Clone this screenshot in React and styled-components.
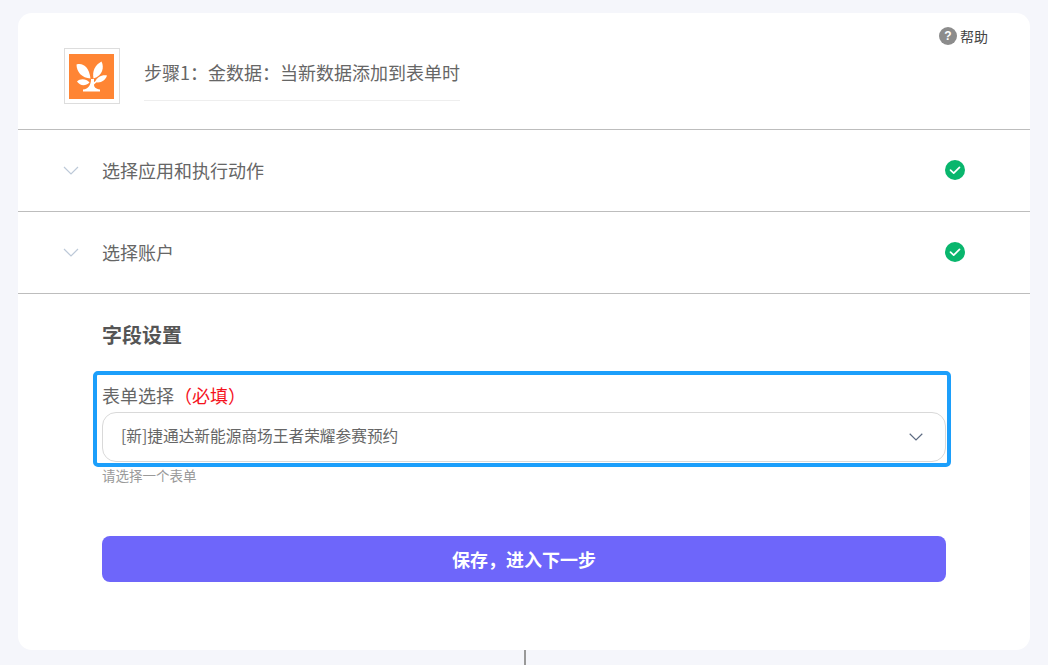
import styled, { createGlobalStyle } from "styled-components";

const GlobalStyle = createGlobalStyle`
  html, body {
    margin: 0;
    height: 100%;
    overflow: hidden;
    background: #f5f6fb;
    font-family: "Noto Sans CJK SC", "Liberation Sans", sans-serif;
  }
`;

const Page = styled.div`
  padding: 13px 18px 0;
  display: flex;
  flex-direction: column;
  align-items: center;
`;
const Card = styled.div`
  width: 100%;
  height: 637px;
  box-sizing: border-box;
  background: #fff;
  border-radius: 14px;
`;
const Connector = styled.div`
  width: 2px;
  height: 15px;
  background: #999;
  margin-left: 2px;
`;

const Header = styled.div`
  height: 116px;
  box-sizing: border-box;
  padding: 35px 42px 0 46px;
  display: flex;
  align-items: flex-start;
`;
const Logo = styled.div`
  width: 56px;
  height: 56px;
  box-sizing: border-box;
  border: 1px solid #ddd;
  padding: 5px 0 0 4px;
`;
const Title = styled.div`
  margin: 0 0 0 24px;
  width: 316px;
  height: 53px;
  box-sizing: border-box;
  border-bottom: 1px solid #eeeeee;
  padding-top: 10px;
  font-size: 18px;
  line-height: 28px;
  color: #666;
  white-space: nowrap;
`;
const Help = styled.div`
  margin-left: auto;
  margin-top: -22px;
  display: flex;
  align-items: center;
  gap: 3px;
  font-size: 14px;
  line-height: 20px;
  color: #444;
`;
const HelpDot = styled.span`
  width: 18px;
  height: 18px;
  border-radius: 50%;
  background: #8c8c8c;
  color: #fff;
  font-size: 12px;
  font-weight: 700;
  line-height: 18px;
  text-align: center;
  font-family: "Liberation Sans", sans-serif;
`;

const Row = styled.div`
  height: 82px;
  box-sizing: border-box;
  border-top: 1px solid #bdbdbd;
  padding: 0 65px 0 45px;
  display: flex;
  align-items: center;
  color: #666;
  font-size: 18px;
`;
const RowLabel = styled.span`
  margin: 0 0 2px 23px;
  flex: 1;
`;
const BadgeSvg = styled.svg`
  margin-bottom: 2px;
`;

const Fields = styled.div`
  border-top: 1px solid #bdbdbd;
  padding: 27px 84px 0;
`;
const SectionTitle = styled.div`
  font-size: 20px;
  line-height: 28px;
  font-weight: 700;
  color: #555;
`;
const Highlight = styled.div`
  margin: 22px -5px 0 -9px;
  height: 96px;
  box-sizing: border-box;
  border: 4px solid #1c9ffb;
  border-radius: 5px;
  padding: 7px 1px 0 5px;
`;
const Label = styled.div`
  font-size: 18px;
  line-height: 26px;
  color: #666;
`;
const Required = styled.span`
  color: #f5121d;
`;
const Select = styled.div`
  margin-top: 4px;
  height: 50px;
  box-sizing: border-box;
  border: 1px solid #d9d9d9;
  border-radius: 14px;
  padding: 0 22px 0 18px;
  display: flex;
  align-items: center;
  justify-content: space-between;
  font-size: 15.7px;
  color: #666;
`;
const SelectValue = styled.span`
  margin-bottom: 3px;
`;
const Hint = styled.div`
  margin-top: -1px;
  font-size: 13.5px;
  line-height: 18px;
  color: #9a9a9a;
`;
const SaveButton = styled.button`
  display: block;
  width: 100%;
  height: 46px;
  margin-top: 52px;
  border: 0;
  border-radius: 8px;
  background: #6e66fa;
  color: #fff;
  font-family: inherit;
  font-size: 18px;
  font-weight: 700;
`;

const TreeLogo = () => (
  <svg width="45" height="45" viewBox="0 0 45 45" style={{ display: "block" }}>
    <rect width="45" height="45" fill="#ff8534" />
    <g fill="#fff">
      <path d="M7.5 10.5 C14 8.5 20 13 21.5 24.5 C13 24 7.5 18 7.5 10.5Z" />
      <path d="M32.5 7.5 C35.5 13 33.5 22 24.5 24.5 C23 17 26 11 32.5 7.5Z" />
      <path d="M8 27.5 C11 24.5 17 24.5 20.5 28.5 C16.5 32.5 11 32 8 27.5Z" />
      <path d="M38 21.5 C36.5 26.5 31.5 29.5 26 28 C28 23 33 20.5 38 21.5Z" />
      <path d="M22 25 L25 25 L25 28 L30 26 L25 30.5 C25 33 26.5 35 31 35.5 L31 37.5 L14 37.5 L14 35.5 C19.5 35 22 31 22 25Z" />
    </g>
  </svg>
);

const CheckBadge = () => (
  <BadgeSvg width="20" height="20" viewBox="0 0 20 20">
    <circle cx="10" cy="10" r="10" fill="#09b66d" />
    <path d="M5.5 10.2 L8.7 13.2 L14.5 7.4" fill="none" stroke="#fff" strokeWidth="1.7" strokeLinecap="round" strokeLinejoin="round" />
  </BadgeSvg>
);

const RowChevron = () => (
  <svg width="16" height="9" viewBox="0 0 16 9">
    <path d="M1 1 L8 8 L15 1" fill="none" stroke="#bdc9d8" strokeWidth="1.2" />
  </svg>
);

const SelectChevron = () => (
  <svg width="14" height="8" viewBox="0 0 14 8">
    <path d="M0.7 0.8 L7 7 L13.3 0.8" fill="none" stroke="#5d6b82" strokeWidth="1.2" />
  </svg>
);

const rows = ["选择应用和执行动作", "选择账户"];

export default function App() {
  return (
    <>
      <GlobalStyle />
      <Page>
        <Card>
          <Header>
            <Logo>
              <TreeLogo />
            </Logo>
            <Title>步骤1：金数据：当新数据添加到表单时</Title>
            <Help>
              <HelpDot>?</HelpDot>
              帮助
            </Help>
          </Header>
          {rows.map((label) => (
            <Row key={label}>
              <RowChevron />
              <RowLabel>{label}</RowLabel>
              <CheckBadge />
            </Row>
          ))}
          <Fields>
            <SectionTitle>字段设置</SectionTitle>
            <Highlight>
              <Label>
                表单选择<Required>（必填）</Required>
              </Label>
              <Select>
                <SelectValue>[新]捷通达新能源商场王者荣耀参赛预约</SelectValue>
                <SelectChevron />
              </Select>
            </Highlight>
            <Hint>请选择一个表单</Hint>
            <SaveButton>保存，进入下一步</SaveButton>
          </Fields>
        </Card>
        <Connector />
      </Page>
    </>
  );
}
